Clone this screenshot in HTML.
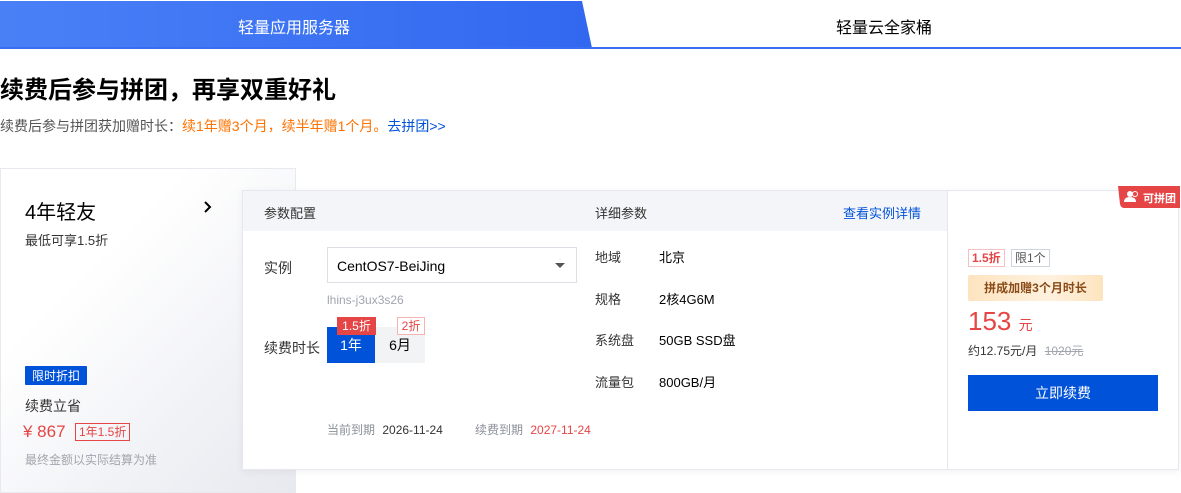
<!DOCTYPE html><html><head><meta charset="utf-8"><style>
*{margin:0;padding:0;box-sizing:border-box}
body{width:1181px;height:493px;overflow:hidden;background:#fff;font-family:"Liberation Sans","Noto Sans CJK SC",sans-serif;color:#000;position:relative}
.a{position:absolute;white-space:nowrap}
</style></head><body>
<svg class="a" style="left:0;top:0" width="1181" height="50"><defs><linearGradient id="g" x1="0" x2="1"><stop offset="0" stop-color="#4a80f6"/><stop offset="1" stop-color="#3168f0"/></linearGradient></defs><polygon points="0,1 582,1 592,48 0,48" fill="url(#g)"/><rect x="0" y="47" width="1181" height="2" fill="#3a6df2"/></svg>
<div class="a" style="left:238px;top:14px;font-size:16px;color:#fff">轻量应用服务器</div>
<div class="a" style="left:836px;top:14px;font-size:16px;color:#000">轻量云全家桶</div>
<div class="a" style="left:0;top:70px;font-size:24px;font-weight:bold;color:#000">续费后参与拼团，再享双重好礼</div>
<div class="a" style="left:0;top:116px;font-size:14px;color:#555">续费后参与拼团获加赠时长：<span style="color:#ff7200">续1年赠3个月，续半年赠1个月。</span><span style="color:#0052d9">去拼团&gt;&gt;</span></div>
<div class="a" style="left:0;top:168px;width:296px;height:325px;border:1px solid #e8e9ee;background:linear-gradient(135deg,#fff 30%,#f1f2f6 70%,#e8e9ef)"></div>
<div class="a" style="left:25px;top:196px;font-size:20px">4年轻友</div>
<svg class="a" style="left:202px;top:200px" width="10" height="14"><path d="M3,2 L8,7 L3,12" fill="none" stroke="#000" stroke-width="2"/></svg>
<div class="a" style="left:25px;top:230px;font-size:13px;color:#333">最低可享1.5折</div>
<div class="a" style="left:25px;top:366px;background:#0052d9;color:#fff;font-size:12px;padding:1px 7px;height:19px;border-radius:1px">限时折扣</div>
<div class="a" style="left:25px;top:396px;font-size:14px;color:#333">续费立省</div>
<div class="a" style="left:23px;top:422px;font-size:17px;color:#e54545">¥ 867</div>
<div class="a" style="left:75px;top:423px;font-size:12px;color:#e54545;border:1px solid #e54545;padding:0 3px;height:18px;line-height:16px">1年1.5折</div>
<div class="a" style="left:25px;top:451px;font-size:12px;color:#a2a5ad">最终金额以实际结算为准</div>
<div class="a" style="left:242px;top:190px;width:937px;height:280px;background:#fff;border:1px solid #e6e8ee;box-shadow:0 2px 8px rgba(0,0,0,.05)"></div>
<div class="a" style="left:243px;top:191px;width:704px;height:40px;background:#f4f5f8"></div>
<div class="a" style="left:947px;top:191px;width:1px;height:278px;background:#e6e8ee"></div>
<div class="a" style="left:264px;top:203px;font-size:13px;color:#333">参数配置</div>
<div class="a" style="left:595px;top:203px;font-size:13px;color:#333">详细参数</div>
<div class="a" style="left:843px;top:203px;font-size:13px;color:#0052d9">查看实例详情</div>
<div class="a" style="left:264px;top:258px;font-size:14px;color:#333">实例</div>
<div class="a" style="left:327px;top:247px;width:250px;height:36px;border:1px solid #dcdfe6"></div>
<div class="a" style="left:337px;top:258px;font-size:14px">CentOS7-BeiJing</div>
<svg class="a" style="left:555px;top:263px" width="10" height="6"><polygon points="0,0 10,0 5,5" fill="#555"/></svg>
<div class="a" style="left:327px;top:293px;font-size:12px;color:#a2a5ad">lhins-j3ux3s26</div>
<div class="a" style="left:264px;top:338px;font-size:14px;color:#333">续费时长</div>
<div class="a" style="left:327px;top:327px;width:48px;height:36px;background:#0052d9;color:#fff;font-size:14px;text-align:center;line-height:36px">1年</div>
<div class="a" style="left:375px;top:327px;width:50px;height:36px;background:#f2f3f5;color:#000;font-size:14px;text-align:center;line-height:36px">6月</div>
<div class="a" style="left:337px;top:317px;width:39px;height:18px;background:#e54545;color:#fff;font-size:12px;text-align:center;line-height:18px">1.5折</div>
<div class="a" style="left:397px;top:317px;width:28px;height:18px;background:#fff;border:1px solid #f6b3b3;color:#e54545;font-size:12px;text-align:center;line-height:16px">2折</div>
<div class="a" style="left:327px;top:421px;font-size:12px;color:#8a8f99">当前到期 <span style="color:#333;margin-left:4px">2026-11-24</span></div>
<div class="a" style="left:475px;top:421px;font-size:12px;color:#8a8f99">续费到期 <span style="color:#e54545;margin-left:4px">2027-11-24</span></div>
<div class="a" style="left:595px;top:237px;font-size:13px;color:#333;line-height:41.7px">地域<br>规格<br>系统盘<br>流量包</div>
<div class="a" style="left:659px;top:237px;font-size:13px;color:#000;line-height:41.7px">北京<br>2核4G6M<br>50GB SSD盘<br>800GB/月</div>
<svg class="a" style="left:1118px;top:186px" width="62" height="22"><path d="M0,0 H62 V22 H6 Q3,22 2,18 Z" fill="#e54545"/><circle cx="12" cy="8" r="3" fill="#fff"/><path d="M6,16 Q6,11 12,11 Q18,11 18,16 Z" fill="#fff"/><circle cx="17" cy="8" r="2.5" fill="none" stroke="#fff" stroke-width="1"/></svg>
<div class="a" style="left:1143px;top:190px;font-size:11px;color:#fff;font-weight:bold">可拼团</div>
<div class="a" style="left:968px;top:249px;font-size:12px;color:#e54545;font-weight:bold;border:1px solid #f6c0c0;padding:0 3px;height:18px;line-height:16px">1.5折</div>
<div class="a" style="left:1011px;top:249px;font-size:12px;color:#555;border:1px solid #cfd5de;padding:0 3px;height:18px;line-height:16px">限1个</div>
<div class="a" style="left:968px;top:275px;width:135px;height:26px;background:linear-gradient(90deg,#fde4bf,#fff1df 60%,#fde4bf);color:#8a4b17;font-size:12px;font-weight:bold;text-align:center;line-height:26px;border-radius:2px">拼成加赠3个月时长</div>
<div class="a" style="left:968px;top:306px;font-size:26px;color:#e54545">153 <span style="font-size:14px">元</span></div>
<div class="a" style="left:968px;top:342px;font-size:12px;color:#333">约12.75元/月 <span style="color:#a2a5ad;text-decoration:line-through;margin-left:4px">1020元</span></div>
<div class="a" style="left:968px;top:375px;width:190px;height:36px;background:#0052d9;color:#fff;font-size:14px;text-align:center;line-height:36px">立即续费</div>
</body></html>
